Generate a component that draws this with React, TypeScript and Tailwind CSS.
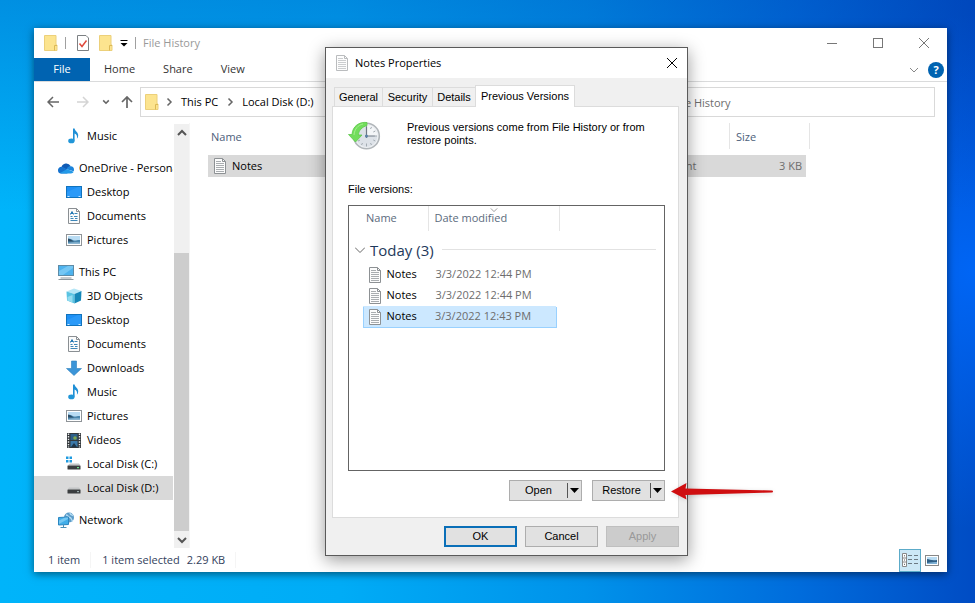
import React from "react";

type IconName =
  | "music"
  | "onedrive"
  | "desktop"
  | "documents"
  | "pictures"
  | "pc"
  | "cube"
  | "downloads"
  | "videos"
  | "diskC"
  | "disk"
  | "network";

type NavItem = { label: string; icon: IconName; top?: boolean; active?: boolean };

const navGroups: NavItem[][] = [
  [{ label: "Music", icon: "music" }],
  [
    { label: "OneDrive - Personal", icon: "onedrive", top: true },
    { label: "Desktop", icon: "desktop" },
    { label: "Documents", icon: "documents" },
    { label: "Pictures", icon: "pictures" },
  ],
  [
    { label: "This PC", icon: "pc", top: true },
    { label: "3D Objects", icon: "cube" },
    { label: "Desktop", icon: "desktop" },
    { label: "Documents", icon: "documents" },
    { label: "Downloads", icon: "downloads" },
    { label: "Music", icon: "music" },
    { label: "Pictures", icon: "pictures" },
    { label: "Videos", icon: "videos" },
    { label: "Local Disk (C:)", icon: "diskC" },
    { label: "Local Disk (D:)", icon: "disk", active: true },
  ],
  [{ label: "Network", icon: "network", top: true }],
];

const versions = [
  { name: "Notes", date: "3/3/2022 12:44 PM" },
  { name: "Notes", date: "3/3/2022 12:44 PM" },
  { name: "Notes", date: "3/3/2022 12:43 PM", selected: true },
];

const drawings: Record<IconName, React.ReactNode> = {
  music: (
    <>
      <path d="M7 0.5h1.6c0.2 2.4 3.9 3.6 3.6 7.2c-0.1 1.2-0.6 2.2-1.3 3c0.5-2.8-0.3-4.3-2.3-5.1v7.2H7z" fill="#1f8fd6" />
      <ellipse cx="5.4" cy="12.9" rx="3.2" ry="2.4" fill="#2196d8" />
    </>
  ),
  onedrive: (
    <>
      <path d="M3.4 7.2A5 5 0 0 1 12.6 6L8.5 9.6z" fill="#0f5bb5" />
      <path d="M0 10.4a3.3 3.3 0 0 1 3.8-3.5c1.2 0.1 2 0.5 2.8 1L12 11.8l-3 1.6H3.2A3.1 3.1 0 0 1 0 10.4z" fill="#1673cf" />
      <path d="M8.4 9.3C9.4 7 11 5.9 12.7 6.3A3.5 3.5 0 0 1 16 9.8c0 0.5-0.1 1-0.3 1.5z" fill="#1b84dc" />
      <path d="M2 13l6.5-3.6c0.5-0.2 1-0.1 1.5 0.2l5.6 2.2c-0.4 0.9-1.3 1.6-2.6 1.6H3.2z" fill="#249ae8" />
    </>
  ),
  desktop: (
    <>
      <rect x="0.5" y="2.5" width="15" height="11" fill="#1e90f5" stroke="#1173bd" />
      <path d="M1 13V8L12 3h3v10z" fill="#38a3fb" opacity="0.5" />
      <path d="M1.5 12.5h2M12.5 12.5h2" stroke="#cfeaff" />
    </>
  ),
  documents: (
    <>
      <path d="M2.5 0.5h8l3 3v12h-11z" fill="#fbfbfb" stroke="#8a8f93" />
      <path d="M10.5 0.5v3h3" fill="none" stroke="#8a8f93" />
      <path d="M4.5 6.5L6 3.5l1.5 3M4.5 5.5h3" fill="none" stroke="#2479b5" />
      <path d="M8.5 5.5h3M4.500 8.500h2M8 8.500h3.500M4.500 10.500h3M9 10.500h2.500M4.500 12.500h7" stroke="#3c86b8" />
    </>
  ),
  pictures: (
    <>
      <rect x="0.5" y="2.5" width="15" height="11" fill="#fff" stroke="#8f9498" />
      <rect x="2" y="4" width="12" height="8" fill="#b9dcf3" />
      <path d="M2 7c3-1 4 1 6 1.5s4-1 6-0.5v4H2z" fill="#4a86ad" />
      <path d="M2 6.5c2 0.2 4 2 6 3H2z" fill="#2b4c66" />
      <path d="M2 11c4-1 8-1 12-0.5V12H2z" fill="#8db7d2" />
    </>
  ),
  pc: (
    <>
      <rect x="0.5" y="1.5" width="15" height="10" fill="#4eb3ee" stroke="#5e8ba6" />
      <path d="M1 11V7l9-5h5v2L5 11z" fill="#86d0f7" opacity="0.7" />
      <path d="M2.5 14h11M0.5 15.5h15" stroke="#8d979d" />
    </>
  ),
  cube: (
    <>
      <path d="M0.5 3.5L8 0.5l7.5 2.5L8.5 6z" fill="#b5e6f6" />
      <path d="M0.5 3.5L8.5 6v9.5L1 12.5z" fill="#59c3e2" />
      <path d="M15.5 3L8.5 6v9.5l6.5-3z" fill="#1588b8" />
      <path d="M1.5 9l5-2v7.5l-5-2z" fill="#93dcf0" />
    </>
  ),
  downloads: <path d="M5.5 1h5v7.500H15.500L8 15.500L0.500 8.500h5z" fill="#3c95d8" stroke="#2b7fbd" strokeWidth="0.6" />,
  videos: (
    <>
      <rect x="1" y="1" width="14" height="15" fill="#33383b" />
      <path d="M2.5 1.5v14M13.5 1.5v14" stroke="#e9ecee" strokeWidth="1.4" strokeDasharray="1.4 1.2" />
      <rect x="4.5" y="2" width="7" height="6" fill="#2d5f8a" />
      <rect x="4.5" y="9" width="7" height="6" fill="#3b78a8" />
      <circle cx="9" cy="6" r="1.8" fill="#7fa650" />
      <path d="M5 15l3-4l3 4z" fill="#1d3347" />
    </>
  ),
  diskC: (
    <>
      <path d="M0 0.5h2.500v2.500H0zM3.500 0.500h2.500v2.500H3.500zM0 4h2.500v2.500H0zM3.500 4h2.500v2.500H3.500z" fill="#1d9ae0" />
      <path d="M4 7.500h9l1.500 2h-13z" fill="#c2c4c5" />
      <rect x="1.5" y="9.5" width="13" height="4" rx="0.5" fill="#3a3d3f" />
      <rect x="11" y="11" width="2" height="1.2" fill="#6fe08a" />
    </>
  ),
  disk: (
    <>
      <path d="M3 7.5h10l1.5 2h-13z" fill="#c2c4c5" />
      <rect x="1.5" y="9.5" width="13" height="4" rx="0.5" fill="#3a3d3f" />
      <rect x="11" y="11" width="2" height="1.2" fill="#9aa" />
    </>
  ),
  network: (
    <>
      <circle cx="11" cy="5.5" r="5" fill="#5b9cc9" />
      <path d="M8 3c2 0 2 2 4 2.5s1 3 3 3.5M12 1c0 1 1 2 3 2.5" fill="none" stroke="#b4dbf2" strokeWidth="1.3" />
      <path d="M0.5 5.5l10-0.5v7.5l-10 0.5z" fill="#41aee9" stroke="#2b86c0" />
      <path d="M1 12V8.5L7 5.5h3V7z" fill="#8bd3f7" opacity="0.7" />
      <path d="M5.5 13v2M2.5 15.500h6" stroke="#4a90b8" fill="none" />
    </>
  ),
};

const NavIcon = ({ name }: { name: IconName }) => (
  <svg viewBox="0 0 16 16" className="size-4 shrink-0" aria-hidden="true">
    {drawings[name]}
  </svg>
);

const FolderIcon = () => (
  <svg viewBox="0 0 14 16" className="h-4 w-[14px] shrink-0" aria-hidden="true">
    <path d="M0.5 0.5h11.500v9.500h1v5.500H0.500z" fill="#fce48f" stroke="#ecd07a" />
    <path d="M10.500 15.500V10.500H13" fill="none" stroke="#dcb955" />
  </svg>
);

const NoteIcon = ({ faded = false }: { faded?: boolean }) => (
  <svg viewBox="0 0 14 16" className={faded ? "h-4 w-[14px] shrink-0 opacity-60" : "h-4 w-[14px] shrink-0"} aria-hidden="true">
    <path d="M1.5 0.5h8l3 3v12h-11z" fill="#fcfcfc" stroke="#8d9194" />
    <path d="M9.5 0.5v3h3" fill="none" stroke="#8d9194" />
    <path d="M3 3.5h5M3 5.5h8M3 7.5h8M3 9.5h8M3 11.5h8M3 13.5h8" stroke="#a9adb0" />
  </svg>
);

const Chevron = ({ d, className }: { d: string; className: string }) => (
  <svg viewBox="0 0 10 10" className={className} fill="none" stroke="currentColor" aria-hidden="true">
    <path d={d} />
  </svg>
);

const down = "M1 3l4 4l4-4";
const right = "M3.5 1.5l3.500 3.500l-3.500 3.500";

const TitleBar = () => (
  <header className="flex h-[30px] items-center pr-[18px] pl-[10px] text-[#999]">
    <FolderIcon />
    <span className="ml-[7px] h-3 w-px bg-[#a0a0a0]" />
    <button type="button" aria-label="Properties" className="ml-[11px]">
      <svg viewBox="0 0 12 16" className="h-4 w-3" aria-hidden="true">
        <path d="M0.5 0.5h8.5l2.5 2.5v12.5H0.5z" fill="#fff" stroke="#7c8083" />
        <path d="M2.5 8.5l2.5 3l4.5-6" fill="none" stroke="#e04a3c" strokeWidth="1.5" />
      </svg>
    </button>
    <button type="button" aria-label="New folder" className="ml-[10px]">
      <FolderIcon />
    </button>
    <button type="button" aria-label="Customize Quick Access Toolbar" className="ml-[7px]">
      <svg viewBox="0 0 8 8" className="size-2" aria-hidden="true">
        <path d="M0.500 1.500h7" stroke="#000" />
        <path d="M0.500 4h7l-3.500 3.500z" fill="#000" />
      </svg>
    </button>
    <span className="ml-[7px] h-3 w-px bg-[#a0a0a0]" />
    <h1 className="ml-[7px] grow text-[11px]">File History</h1>
    <div className="flex items-center gap-9 text-[#777]">
      <button type="button" aria-label="Minimize">
        <svg viewBox="0 0 10 10" className="size-[10px]" stroke="currentColor" aria-hidden="true">
          <path d="M0 5.5h10" />
        </svg>
      </button>
      <button type="button" aria-label="Maximize">
        <svg viewBox="0 0 10 10" className="size-[10px]" fill="none" stroke="currentColor" aria-hidden="true">
          <rect x="0.5" y="0.5" width="9" height="9" />
        </svg>
      </button>
      <button type="button" aria-label="Close">
        <svg viewBox="0 0 10 10" className="size-[10px]" stroke="currentColor" aria-hidden="true">
          <path d="M0 0l10 10M10 0L0 10" />
        </svg>
      </button>
    </div>
  </header>
);

const Ribbon = () => (
  <nav className="flex h-6 items-center border-b border-[#dadbdc] pr-[3px] text-[11px] text-[#333]">
    <button type="button" className="h-full w-14 bg-[#0063b1] text-white">File</button>
    <button type="button" className="ml-[14px]">Home</button>
    <button type="button" className="ml-7">Share</button>
    <button type="button" className="ml-7">View</button>
    <div className="ml-auto flex items-center gap-[9px] text-[#888]">
      <button type="button" aria-label="Expand the Ribbon">
        <Chevron d={down} className="size-[10px]" />
      </button>
      <button type="button" aria-label="Help" className="size-4 rounded-full bg-[#0063b1] text-[11px] leading-4 font-bold text-white">
        ?
      </button>
    </div>
  </nav>
);

const AddressRow = () => (
  <div className="flex items-center gap-[7px] py-[5px] pr-3 pl-[13px] text-[11px]">
    <div className="flex items-center text-[#666]">
      <button type="button" aria-label="Back">
        <svg viewBox="0 0 12 12" className="size-3" fill="none" stroke="currentColor" strokeWidth="1.5" aria-hidden="true">
          <path d="M12 6H1M6 1L1 6l5 5" />
        </svg>
      </button>
      <button type="button" aria-label="Forward" className="ml-[18px] text-[#d4d4d4]">
        <svg viewBox="0 0 12 12" className="size-3" fill="none" stroke="currentColor" strokeWidth="1.5" aria-hidden="true">
          <path d="M0 6h11M6 1l5 5l-5 5" />
        </svg>
      </button>
      <button type="button" aria-label="Recent locations" className="ml-[13px]">
        <Chevron d="M1.5 3l3.5 3.5l3.5-3.5" className="size-2 stroke-2" />
      </button>
      <button type="button" aria-label="Up" className="ml-[11px]">
        <svg viewBox="0 0 12 12" className="size-3" fill="none" stroke="currentColor" strokeWidth="1.7" aria-hidden="true">
          <path d="M6 12V1M1 6l5-5l5 5" />
        </svg>
      </button>
    </div>
    <div className="flex h-[30px] grow items-center border border-[#d9d9d9] pl-1 text-black">
      <FolderIcon />
      <Chevron d={right} className="ml-[5px] size-[10px] stroke-[1.5] text-[#666]" />
      <a href="#pc" className="ml-[7px]">This PC</a>
      <Chevron d={right} className="mx-[7px] size-[10px] stroke-[1.5] text-[#666]" />
      <a href="#disk-d">Local Disk (D:)</a>
    </div>
    <input
      type="text"
      aria-label="Search File History"
      placeholder="Search File History"
      className="h-[30px] w-[326px] border border-[#d9d9d9] pl-[26px] placeholder:text-[#6d6d6d]"
    />
  </div>
);

const Sidebar = () => (
  <div className="flex w-[155px] shrink-0 pt-px">
    <nav className="flex w-[139px] flex-col gap-2 overflow-hidden text-[11px] text-black">
      {navGroups.map((group, i) => (
        <ul key={i}>
          {group.map((item) => (
            <li key={item.label} className={item.active ? "bg-[#d9d9d9]" : ""}>
              <a
                href="#item"
                className={
                  item.top
                    ? "flex h-6 items-center gap-[5px] pl-6 whitespace-nowrap"
                    : "flex h-6 items-center gap-[5px] pl-8 whitespace-nowrap"
                }
              >
                <NavIcon name={item.icon} />
                {item.label}
              </a>
            </li>
          ))}
        </ul>
      ))}
    </nav>
    <div className="ml-px flex w-[15px] flex-col bg-[#f0f0f0] text-[#555]">
      <button type="button" aria-label="Scroll up" className="flex h-[18px] items-center justify-center">
        <Chevron d="M1 7l4-4l4 4" className="size-[10px] stroke-2" />
      </button>
      <div className="h-[111px]" />
      <div className="grow bg-[#cdcdcd]" />
      <button type="button" aria-label="Scroll down" className="flex h-[17px] items-center justify-center">
        <Chevron d={down} className="size-[10px] stroke-2" />
      </button>
    </div>
  </div>
);

const FileList = () => (
  <main className="grow border-l border-[#f5f5f5] pl-[18px] text-[11px]">
    <table className="w-[602px] table-fixed text-left">
      <colgroup>
        <col className="w-[403px]" />
        <col className="w-[118px]" />
        <col className="w-[77px]" />
        <col className="w-1" />
      </colgroup>
      <thead className="text-[#4c607a]">
        <tr>
          <th className="pb-[6px] font-normal">
            <div className="h-[26px] pl-[3px] leading-[28px]">Name</div>
          </th>
          <td className="pb-[6px]" />
          <th className="pb-[6px] font-normal">
            <div className="h-[26px] border-l border-[#e5e5e5] pl-[6px] leading-[28px]">Size</div>
          </th>
          <td className="pb-[6px]">
            <div className="ml-[3px] h-[26px] border-l border-[#e5e5e5]" />
          </td>
        </tr>
      </thead>
      <tbody>
        <tr className="h-[22px] text-[#6d6d6d]">
          <td className="bg-[#d9d9d9] pl-[5px] text-black">
            <span className="flex items-center gap-[5px]">
              <NoteIcon />
              Notes
            </span>
          </td>
          <td className="bg-[#d9d9d9] pl-[7px]">Text Document</td>
          <td className="bg-[#d9d9d9] pr-1 text-right">3 KB</td>
          <td />
        </tr>
      </tbody>
    </table>
  </main>
);

const StatusBar = () => (
  <footer className="flex h-6 items-center pr-2 pl-[14px] text-[11px] text-[#33415c]">
    <span>1 item</span>
    <span className="ml-[10px] h-4 w-px bg-[#f5f5f5]" />
    <span className="ml-[11px]">1 item selected</span>
    <span className="ml-[7px]">2.29 KB</span>
    <span className="ml-[10px] h-4 w-px bg-[#f5f5f5]" />
    <div className="ml-auto flex h-full items-center gap-1">
      <button
        type="button"
        aria-label="Details view"
        className="flex h-[23px] w-[22px] items-center justify-center border border-[#5cabc9] bg-[#cce8f6]"
      >
        <svg viewBox="0 0 16 14" className="h-[14px] w-4" fill="none" stroke="#555" aria-hidden="true">
          <path d="M0.5 0.5h4v13h-4zM0.5 5h4M0.5 9h4" stroke="#888" fill="#fff" />
          <path d="M2 2.8h1M2 7h1M2 11.3h1" />
          <path d="M6 2.5h4M12 2.5h4M6 6.5h4M12 6.5h4M6 10.5h4M12 10.5h4" stroke="#6c7a83" />
        </svg>
      </button>
      <button type="button" aria-label="Large icons view">
        <svg viewBox="0 0 14 11" className="h-[11px] w-[14px]" aria-hidden="true">
          <rect x="0.5" y="0.5" width="13" height="10" fill="#fff" stroke="#888" />
          <rect x="2" y="2" width="10" height="7" fill="#b9dcf3" />
          <path d="M2 4c3 0 4 2 10 1v4H2z" fill="#2f5f86" />
          <path d="M2 8c4-1 7-1 10-1v2H2z" fill="#7fb2d6" />
        </svg>
      </button>
    </div>
  </footer>
);

const HistoryIcon = () => (
  <svg viewBox="0 0 34 30" className="h-[30px] w-[34px] shrink-0" aria-hidden="true">
    <circle cx="18.500" cy="15" r="12.800" fill="#eef1f4" stroke="#b1b6ba" strokeWidth="1.6" />
    <circle cx="18.500" cy="15" r="10.800" fill="#dde2e8" />
    <path d="M18.500 4.200A10.800 10.800 0 0 1 29.300 15h-10.800z" fill="#f4f6f8" />
    <path d="M18.500 4.500v3M18.500 22.500v3M26 15h3M23.500 6l-1 2M27.300 10l-2 1M27.300 20l-2-1M23.500 24l-1-2M13.500 24l1-2M10 20l2-1" stroke="#a2aab1" />
    <path d="M18.500 5.500V17M17 15h9.500" stroke="#6f7984" strokeWidth="1.2" />
    <circle cx="18.500" cy="15" r="1.500" fill="#5d82a8" />
    <path d="M19 1.500C11 0.500 4.500 5.500 4 13.500H0.500L7.500 21l6.500-7h-3.500c0-4.500 3.500-8 8.500-9.500z" fill="#72dd5c" stroke="#5fc94c" strokeWidth="0.8" />
    <path d="M15 3C10 4 6.500 8 6 14" fill="none" stroke="#a5ef8f" />
  </svg>
);

const VersionList = () => (
  <div className="h-[266px] border border-[#646464] font-['Open_Sans',sans-serif] text-[11px]">
    <table className="w-[309px] table-fixed text-left">
      <colgroup>
        <col className="w-[14px]" />
        <col className="w-[65px]" />
        <col className="w-[128px]" />
        <col className="w-[102px]" />
      </colgroup>
      <thead className="text-[#5b6b7d]">
        <tr className="h-[25px]">
          <td />
          <th className="pl-[3px] font-normal">Name</th>
          <th className="relative border-l border-[#e5e5e5] pl-[6px] font-normal">
            Date modified
            <Chevron d={down} className="absolute top-0 left-[61px] size-2 text-[#888]" />
          </th>
          <td>
            <div className="ml-[3px] h-[25px] border-l border-[#e5e5e5]" />
          </td>
        </tr>
      </thead>
      <tbody>
        <tr className="h-[33px]">
          <th colSpan={4} className="pt-[5px] pr-[2px] pl-[6px] font-normal">
            <div className="flex items-center text-[15px] leading-[22px] text-[#1e395b]">
              <Chevron d="M0 2.5l5 5l5-5" className="size-[10px] text-[#666]" />
              <span className="ml-[5px]">Today (3)</span>
              <span className="ml-2 h-px grow bg-[#e2e2e2]" />
            </div>
          </th>
        </tr>
        {versions.map((v, i) => (
          <tr key={i} className="h-[21px] text-[#6d6d6d]">
            <td />
            <td
              className={
                v.selected
                  ? "border-y border-l border-[#99d1ff] bg-[#cce8ff] pl-1 text-black"
                  : "border border-transparent pl-1 text-black"
              }
            >
              <span className="flex items-center gap-[5px]">
                <NoteIcon />
                {v.name}
              </span>
            </td>
            <td
              className={
                v.selected
                  ? "border-y border-r border-[#99d1ff] bg-[#cce8ff] pl-[7px]"
                  : "border border-transparent pl-[7px]"
              }
            >
              {v.date}
            </td>
            <td />
          </tr>
        ))}
      </tbody>
    </table>
  </div>
);

const SplitButton = ({ label }: { label: string }) => (
  <div className="flex h-[21px] w-[73px] items-center border border-[#adadad] bg-[#e1e1e1]">
    <button type="button" className="h-full grow">{label}</button>
    <span className="h-[15px] w-px bg-[#555]" />
    <button type="button" aria-label={label + " options"} className="flex h-full w-[13px] items-center justify-center">
      <svg viewBox="0 0 9 5" className="h-[5px] w-[9px]" aria-hidden="true">
        <path d="M0 0h9L4.5 5z" fill="#000" />
      </svg>
    </button>
  </div>
);

const PropertiesDialog = () => (
  <section
    role="dialog"
    aria-label="Notes Properties"
    className="absolute top-[47px] left-[325px] w-[363px] border border-[#5a5a5a] bg-[#f0f0f0] font-['Liberation_Sans',sans-serif] text-[11px] text-black shadow-[0_4px_16px_rgba(0,0,0,0.4)]"
  >
    <header className="flex h-[30px] items-center bg-white pr-[10px] pl-[9px] font-['Open_Sans',sans-serif]">
      <NoteIcon faded />
      <h2 className="ml-[6px] grow">Notes Properties</h2>
      <button type="button" aria-label="Close dialog">
        <svg viewBox="0 0 10 10" className="size-[10px]" stroke="#000" aria-hidden="true">
          <path d="M0 0l10 10M10 0L0 10" />
        </svg>
      </button>
    </header>
    <div className="pt-[7px] pr-2 pb-2 pl-[6px]">
      <div role="tablist" className="flex items-end pl-[2px]">
        <button type="button" role="tab" aria-selected="false" className="h-[19px] w-[49px] border border-b-0 border-[#dcdcdc]">General</button>
        <button type="button" role="tab" aria-selected="false" className="h-[19px] w-[50px] border-t border-r border-[#dcdcdc]">Security</button>
        <button type="button" role="tab" aria-selected="false" className="h-[19px] w-[42px] border-t border-[#dcdcdc]">Details</button>
        <button type="button" role="tab" aria-selected="true" className="-mb-px h-[22px] w-[100px] border border-b-0 border-[#dcdcdc] bg-white">
          Previous Versions
        </button>
      </div>
      <div role="tabpanel" className="border border-[#dcdcdc] bg-white pt-[14px] pr-[13px] pb-4 pl-[15px]">
        <div className="flex">
          <HistoryIcon />
          <p className="ml-[25px] w-[250px] leading-[13px]">
            Previous versions come from File History or from restore points.
          </p>
        </div>
        <p className="mt-[31px] mb-[9px] leading-[14px]">File versions:</p>
        <VersionList />
        <div className="mt-[9px] flex justify-end gap-[10px]">
          <SplitButton label="Open" />
          <SplitButton label="Restore" />
        </div>
      </div>
      <div className="mt-2 flex justify-end gap-2">
        <button type="button" className="h-[21px] w-[73px] border-2 border-[#0a6fb8] bg-[#e1e1e1]">OK</button>
        <button type="button" className="h-[21px] w-[73px] border border-[#adadad] bg-[#e1e1e1]">Cancel</button>
        <button type="button" disabled className="h-[21px] w-[73px] border border-[#bfbfbf] bg-[#cccccc] text-[#999]">Apply</button>
      </div>
    </div>
  </section>
);

export default function App() {
  return (
    <div className="relative flex min-h-screen bg-[linear-gradient(180deg,rgba(0,60,170,0.3)_0%,rgba(0,60,170,0)_35%),radial-gradient(circle_at_100%_45%,rgba(0,104,250,0.9)_0%,rgba(0,104,250,0)_25%),linear-gradient(90deg,#00b4fa_0%,#00acf6_35%,#0092ea_60%,#006cdc_82%,#004cc4_100%)] pt-7 pr-7 pb-[31px] pl-[34px] font-['Open_Sans',sans-serif]">
      <div className="flex grow flex-col bg-white shadow-[0_2px_8px_rgba(0,0,0,0.5)]">
        <TitleBar />
        <Ribbon />
        <AddressRow />
        <div className="flex grow pt-px">
          <Sidebar />
          <FileList />
        </div>
        <StatusBar />
      </div>
      <PropertiesDialog />
      <svg viewBox="0 0 102 18" className="absolute top-[482px] left-[671px] h-[18px] w-[102px] drop-shadow-sm" aria-hidden="true">
        <path d="M0 9.5L15.5 1l-1 5.500L101 8.500a1 1 0 0 1 0 2L14.500 13l1 4.500z" fill="#cf0e10" />
      </svg>
    </div>
  );
}
